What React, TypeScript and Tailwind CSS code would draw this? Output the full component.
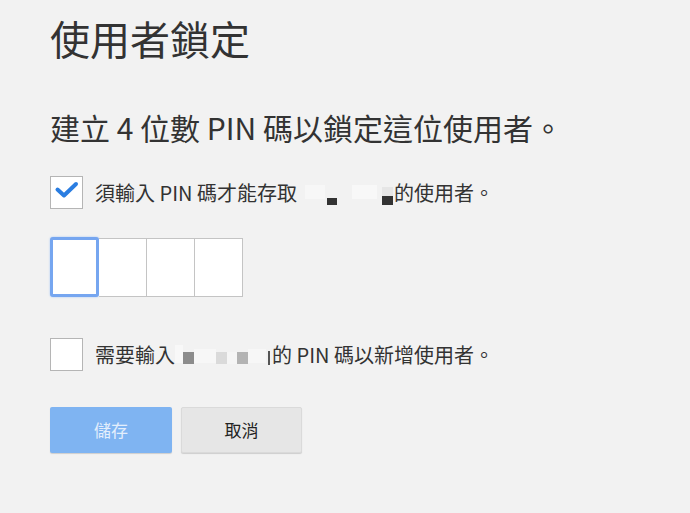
import React from "react";

const font = { fontFamily: '"Noto Sans CJK TC", "Noto Sans", sans-serif' };

export default function App() {
  return (
    <div className="w-[690px] h-[513px] bg-[#f2f2f2] text-[#333333] overflow-hidden" style={font}>
      <div className="pl-[50px] pt-[14px] flex flex-col">
        <h1 className="text-[40px] leading-[48px] font-normal text-[#333]">使用者鎖定</h1>
        <p className="mt-[47px] text-[30px] leading-[36px] text-[#333]">建立 4 位數 PIN 碼以鎖定這位使用者。</p>

        <div className="mt-[31px] flex items-center h-[33px]">
          <div className="relative w-[33px] h-[33px] border border-[#b5b5b5] bg-white">
            <svg className="absolute left-0 top-0" width="31" height="31" viewBox="0 0 31 31">
              <path d="M6.5 12.5 L13 18.5 L25 7" fill="none" stroke="#2a7de1" strokeWidth="4" strokeLinecap="round" strokeLinejoin="round" />
            </svg>
          </div>
          <div className="ml-[12px] text-[20px] leading-[24px] flex items-center text-[#333]">
            <span>須輸入 PIN 碼才能存取</span>
            <span className="relative inline-block w-[97px] h-[24px]">
              <span className="absolute left-[8px] top-[4px] w-[20px] h-[14px] bg-[#f7f7f7]" />
              <span className="absolute left-[30px] top-[17px] w-[10px] h-[7px] bg-[#333]" />
              <span className="absolute left-[55px] top-[4px] w-[25px] h-[14px] bg-[#f8f8f8]" />
              <span className="absolute left-[85px] top-[15px] w-[11px] h-[9px] bg-[#333]" />
              <span className="absolute left-[85px] top-[6px] w-[11px] h-[9px] bg-[#e6e6e6]" />
            </span>
            <span>的使用者。</span>
          </div>
        </div>

        <div className="mt-[29px] flex">
          <div className="w-[49px] h-[60px] -mt-[1px] bg-white border-[3px] border-[#76a6f0] rounded-[3px] shadow-[0_0_2px_#9cc0f5]" />
          <div className="w-[48px] h-[59px] bg-white border-y border-r border-[#c4c4c4]" />
          <div className="w-[48px] h-[59px] bg-white border-y border-r border-[#c4c4c4]" />
          <div className="w-[48px] h-[59px] bg-white border-y border-r border-[#c4c4c4]" />
        </div>

        <div className="mt-[41px] flex items-center h-[33px]">
          <div className="w-[33px] h-[33px] border border-[#b5b5b5] bg-white" />
          <div className="ml-[12px] text-[20px] leading-[24px] flex items-center text-[#333]">
            <span>需要輸入</span>
            <span className="relative inline-block w-[97px] h-[24px]">
              <span className="absolute left-[0px] top-[2px] w-[8px] h-[18px] bg-[#f8f8f8]" />
              <span className="absolute left-[8px] top-[9px] w-[11px] h-[12px] bg-[#8c8c8c]" />
              <span className="absolute left-[19px] top-[6px] w-[22px] h-[14px] bg-[#f7f7f7]" />
              <span className="absolute left-[41px] top-[9px] w-[11px] h-[12px] bg-[#dadada]" />
              <span className="absolute left-[52px] top-[9px] w-[10px] h-[12px] bg-[#f5f5f5]" />
              <span className="absolute left-[62px] top-[9px] w-[11px] h-[12px] bg-[#b3b3b3]" />
              <span className="absolute left-[73px] top-[6px] w-[18px] h-[14px] bg-[#f7f7f7]" />
              <span className="absolute left-[93px] top-[8px] w-[2px] h-[14px] bg-[#555]" />
            </span>
            <span>的 PIN 碼以新增使用者。</span>
          </div>
        </div>

        <div className="mt-[36px] flex gap-[9px]">
          <button className="w-[122px] h-[46px] rounded-[2px] bg-[#7fb4f2] text-[#e3eefc] text-[17px] shadow-[0_1px_1px_rgba(0,0,0,0.15)]">
            儲存
          </button>
          <button className="w-[121px] h-[46px] rounded-[2px] bg-[#e6e6e6] border border-[#dadada] text-[#222] text-[17px] shadow-[0_1px_1px_rgba(0,0,0,0.15)]">
            取消
          </button>
        </div>
      </div>
    </div>
  );
}
